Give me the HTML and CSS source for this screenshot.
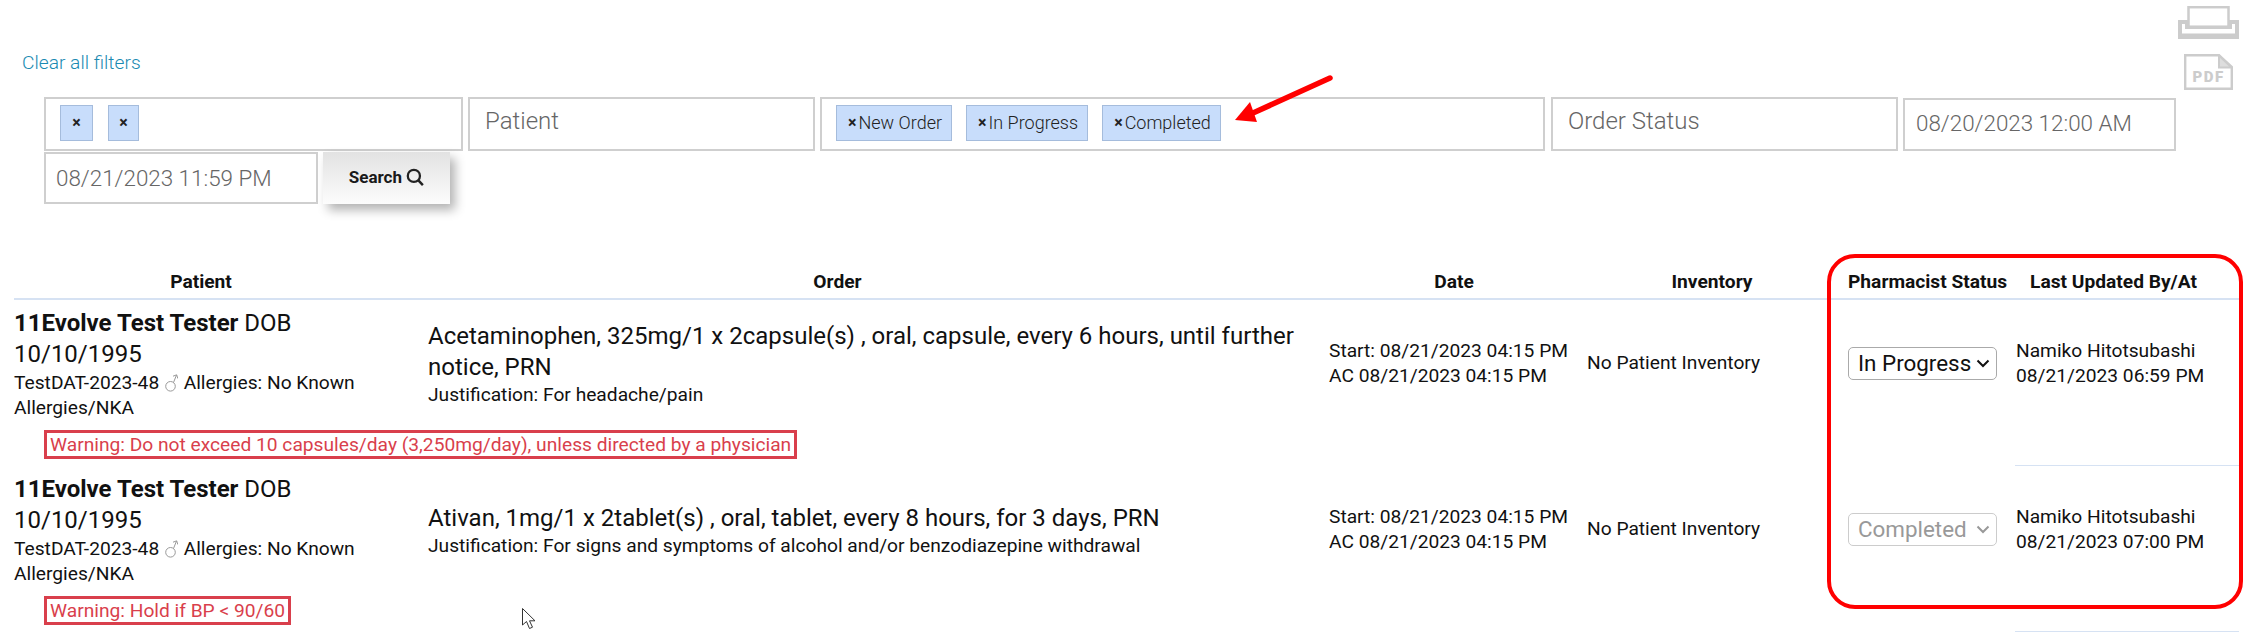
FILE: index.html
```html
<!DOCTYPE html>
<html lang="en">
<head>
<meta charset="utf-8">
<title>Pharmacy orders</title>
<link rel="stylesheet" href="styles.css">
</head>
<body>
<div class="page">
  <header class="top">
    <a class="clear-link">Clear all filters</a>
    <div class="tools">
      <svg class="print-icon" viewBox="0 0 61 33"><rect x="10.5" y="1.2" width="40" height="19.5" fill="#fff" stroke="#ccc" stroke-width="2.5"/><path d="M0 14H10V21H51V14H61V33H0Z M4 18V27.5H57V18H54V23H7V18Z" fill="#ccc" fill-rule="evenodd"/></svg>
      <svg class="pdf-icon" viewBox="0 0 49 36"><path d="M1.2 1.2H35L47.8 13V34.8H1.2Z" fill="#fff" stroke="#ccc" stroke-width="2.4"/><path d="M35 1.5V13.5H47.5Z" fill="#ddd" stroke="#ccc" stroke-width="2"/><text x="24.5" y="28" class="pdf-text">PDF</text></svg>
    </div>
  </header>
  <div class="filters">
    <div class="field w-a"><span class="pill pill-x">×</span><span class="pill pill-x pill-x2">×</span></div>
    <div class="field w-b"><span class="ph">Patient</span></div>
    <div class="field w-c"><span class="pill"><b>×</b>New Order</span><span class="pill"><b>×</b>In Progress</span><span class="pill"><b>×</b>Completed</span></div>
    <div class="field w-d"><span class="ph">Order Status</span></div>
    <div class="field w-e"><span class="ph ph-date">08/20/2023 12:00 AM</span></div>
    <div class="field w-f"><span class="ph ph-date ph-low">08/21/2023 11:59 PM</span></div>
    <button class="search">Search <svg class="mag" viewBox="0 0 16 16"><circle cx="7" cy="7" r="5.4" fill="none" stroke="#222" stroke-width="2"/><path d="M10.8 10.8l4.2 4.4" stroke="#222" stroke-width="2.2"/></svg></button>
  </div>
  <section class="orders">
    <div class="row head">
      <div class="h-patient">Patient</div>
      <div class="h-order">Order</div>
      <div class="h-date">Date</div>
      <div class="h-inv">Inventory</div>
      <div class="h-status">Pharmacist Status</div>
      <div class="h-upd">Last Updated By/At</div>
    </div>
    <div class="row">
      <div class="patient"><div class="name"><b>11Evolve Test Tester</b> DOB 10/10/1995</div><div class="meta">TestDAT-2023-48 <svg class="sex" viewBox="0 0 13 18"><circle cx="5.5" cy="12.3" r="4.8" fill="none" stroke="#999"/><path d="M8.5 8.5L11.5 1M8 2.2L11.7 .8L12.8 4.5" fill="none" stroke="#999"/></svg> Allergies: No Known Allergies/NKA</div></div>
      <div class="order"><div class="drug">Acetaminophen, 325mg/1 x 2capsule(s) , oral, capsule, every 6 hours, until further notice, PRN</div><div class="just">Justification: For headache/pain</div></div>
      <div class="date">Start: 08/21/2023 04:15 PM<br>AC 08/21/2023 04:15 PM</div>
      <div class="inv">No Patient Inventory</div>
      <div class="status"><select class="sel"><option>In Progress</option></select></div>
      <div class="upd">Namiko Hitotsubashi<br>08/21/2023 06:59 PM</div>
      <div class="warn">Warning: Do not exceed 10 capsules/day (3,250mg/day), unless directed by a physician</div>
      <div class="rule"></div>
    </div>
    <div class="row">
      <div class="patient"><div class="name"><b>11Evolve Test Tester</b> DOB 10/10/1995</div><div class="meta">TestDAT-2023-48 <svg class="sex" viewBox="0 0 13 18"><circle cx="5.5" cy="12.3" r="4.8" fill="none" stroke="#999"/><path d="M8.5 8.5L11.5 1M8 2.2L11.7 .8L12.8 4.5" fill="none" stroke="#999"/></svg> Allergies: No Known Allergies/NKA</div></div>
      <div class="order"><div class="drug">Ativan, 1mg/1 x 2tablet(s) , oral, tablet, every 8 hours, for 3 days, PRN</div><div class="just">Justification: For signs and symptoms of alcohol and/or benzodiazepine withdrawal</div></div>
      <div class="date">Start: 08/21/2023 04:15 PM<br>AC 08/21/2023 04:15 PM</div>
      <div class="inv">No Patient Inventory</div>
      <div class="status"><select class="sel" disabled><option>Completed</option></select></div>
      <div class="upd">Namiko Hitotsubashi<br>08/21/2023 07:00 PM</div>
      <div class="warn">Warning: Hold if BP &lt; 90/60</div>
      <div class="rule"></div>
    </div>
  </section>
  <div class="callout-box"></div>
  <svg class="callout-arrow" viewBox="0 0 110 60"><path d="M95 6L18 41" stroke="#f00" stroke-width="5.5" stroke-linecap="round"/><path d="M0 48L15 30L22 50Z" fill="#f00"/></svg>
  <svg class="cursor" viewBox="0 0 14 22"><path d="M.5 .5V17L4.5 13.5L7.5 20.5L10.5 19.2L7.5 12.8H13Z" fill="#fff" stroke="#333"/></svg>
</div>
</body>
</html>
```
FILE: styles.css
```css
* { box-sizing: border-box; }
html, body { margin: 0; background: #fff; overflow: hidden; }
body { font-family: Roboto, "Liberation Sans", sans-serif; color: #111; }
.page { position: relative; width: 2265px; height: 637px; }
.top { display: flex; justify-content: space-between; height: 97px; padding: 0 26px 0 22px; }
.clear-link { margin-top: 52px; font-size: 19.2px; line-height: 22px; font-weight: 300; color: #1a8ab2; height: 22px; }
.tools { display: flex; flex-direction: column; align-items: center; padding-top: 6px; gap: 15px; }
.print-icon { width: 61px; height: 33px; }
.pdf-icon { width: 49px; height: 36px; }
.pdf-text { font: 900 15px Roboto, sans-serif; fill: #ccc; text-anchor: middle; letter-spacing: 1.5px; }
.filters { display: flex; flex-wrap: wrap; align-items: flex-end; column-gap: 5px; row-gap: 1px; padding: 0 80px 0 44px; }
.field { display: flex; align-items: center; gap: 15px; border: 2px solid #cfcfcf; height: 54px; padding: 0 15px; background: #fff; }
.w-a { width: 419px; padding-left: 14px; }
.w-b { width: 347px; }
.w-c { width: 725px; padding-left: 14px; gap: 14px; }
.w-d { width: 347px; margin-left: 1px; }
.w-e { width: 273px; height: 53px; padding: 0 11px; }
.w-f { width: 274px; height: 52px; padding: 0 10px; }
.ph { font-size: 24px; font-weight: 300; color: #666; margin-bottom: 6px; }
.ph-date { font-size: 22.4px; margin-bottom: 3px; }
.ph-low { margin-bottom: 0; }
.pill { display: inline-flex; align-items: center; height: 36px; margin-bottom: 3px; padding: 0 9px 0 11px; background: #c8ddfb; border: 1px solid #a5bcdc; font-size: 18px; font-weight: 300; color: #222; }
.pill b { font-size: 16px; font-weight: 700; margin-right: 2px; }
.pill-x { font-weight: 700; font-size: 16px; justify-content: center; width: 33px; padding: 0; }
.pill-x2 { width: 31px; }
.search { width: 127px; height: 52px; border: 0; padding: 0 0 3px; font: 700 17px Roboto, sans-serif; color: #1a1a1a; background: linear-gradient(#e2e2e2, #fcfcfc); box-shadow: 5px 6px 10px rgba(0,0,0,.3); }
.mag { width: 18px; height: 18px; vertical-align: -3px; }
.orders { margin-top: 60px; margin-left: 14px; width: 2225px; }
.row { display: grid; grid-template-columns: 374px 933px 258px 266px 168px 226px; grid-template-rows: 112px auto auto; align-items: center; font-size: 19.2px; padding-top: 8px; }
.head { grid-template-rows: auto; border-bottom: 2px solid #d6e2f3; padding: 3px 0 1px; font-weight: 700; line-height: 28px; height: 36px; text-align: center; }
.h-order { padding-right: 34px; }
.h-date { padding-left: 8px; }
.h-status { text-align: left; white-space: nowrap; margin-left: 3px; }
.h-upd { text-align: left; white-space: nowrap; margin-left: 17px; }
.name { font-size: 24px; line-height: 31px; }
.meta { line-height: 25px; }
.sex { width: 13px; height: 18px; vertical-align: -3px; margin: 0 1px; }
.order { padding-left: 40px; padding-right: 26px; }
.drug { font-size: 24px; line-height: 31px; }
.just { line-height: 25px; margin-top: -1px; }
.date, .upd { line-height: 25px; white-space: nowrap; margin-bottom: 3px; }
.date { padding-left: 8px; }
.inv { padding-left: 8px; white-space: nowrap; margin-bottom: 4px; }
.status { padding-left: 3px; margin-bottom: 2px; }
.sel { appearance: none; width: 149px; height: 33px; font: 22.4px Roboto, sans-serif; padding: 0 24px 0 9px; color: #111; background: #fff url("data:image/svg+xml,%3Csvg xmlns='http://www.w3.org/2000/svg' width='14' height='9'%3E%3Cpath d='M1.5 1.5L7 7l5.5-5.5' fill='none' stroke='%23111' stroke-width='2'/%3E%3C/svg%3E") no-repeat right 6px center; border: 1px solid #aaa; border-radius: 5px; }
.sel:disabled { color: #999; border-color: #ccc; opacity: 1; background-image: url("data:image/svg+xml,%3Csvg xmlns='http://www.w3.org/2000/svg' width='14' height='9'%3E%3Cpath d='M1.5 1.5L7 7l5.5-5.5' fill='none' stroke='%23999' stroke-width='2'/%3E%3C/svg%3E"); }
.upd { padding-left: 3px; }
.warn { grid-column: 1 / 5; grid-row: 2; justify-self: start; margin: 10px 0 0 30px; height: 29px; border: 3px solid #d93f4c; color: #d93f4c; padding: 0 3px; line-height: 23px; white-space: nowrap; }
.rule { grid-column: 6; grid-row: 3; height: 1px; margin-top: 6px; background: #d6e2f3; margin-left: 2px; }
.callout-box { position: absolute; left: 1827px; top: 254px; width: 416px; height: 355px; border: 4px solid #f00; border-radius: 28px; }
.callout-arrow { position: absolute; left: 1235px; top: 72px; width: 110px; height: 60px; }
.cursor { position: absolute; left: 522px; top: 608px; width: 14px; height: 22px; }
```
